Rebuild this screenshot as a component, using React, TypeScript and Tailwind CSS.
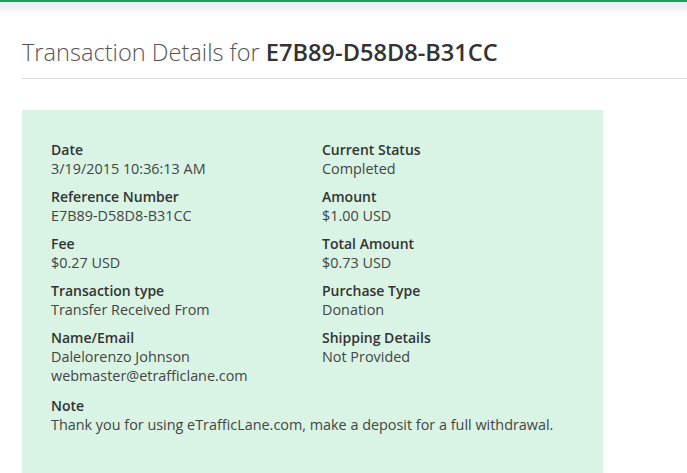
export default function App() {
  const left = [
    { label: 'Date', values: ['3/19/2015 10:36:13 AM'] },
    { label: 'Reference Number', values: ['E7B89-D58D8-B31CC'] },
    { label: 'Fee', values: ['$0.27 USD'] },
    { label: 'Transaction type', values: ['Transfer Received From'] },
    { label: 'Name/Email', values: ['Dalelorenzo Johnson', 'webmaster@etrafficlane.com'] },
  ]
  const right = [
    { label: 'Current Status', values: ['Completed'] },
    { label: 'Amount', values: ['$1.00 USD'] },
    { label: 'Total Amount', values: ['$0.73 USD'] },
    { label: 'Purchase Type', values: ['Donation'] },
    { label: 'Shipping Details', values: ['Not Provided'] },
  ]

  const Field = ({ label, values }: { label: string; values: string[] }) => (
    <div className="mb-[9px]">
      <div className="font-semibold text-[#333]">{label}</div>
      {values.map((v) => (
        <div key={v} className="text-[14.4px] text-[#444]">{v}</div>
      ))}
    </div>
  )

  return (
    <div className="h-screen overflow-hidden bg-white font-['Open_Sans',sans-serif] text-[14px] leading-[19px]">
      <div className="h-[2px] bg-[#239a55]" />
      <div className="h-[12px] bg-gradient-to-b from-[#e4f2f2] via-[#eeeff8] to-white" />

      <div className="pl-[22px]">
        <h1 className="pt-[22px] pb-[10px] text-[23.6px] leading-[32px] font-light text-[#555] border-b border-[#ddd]">
          Transaction Details for <span className="font-semibold text-[#333]">E7B89-D58D8-B31CC</span>
        </h1>

        <div className="mt-[31px] w-[581px] bg-[#d9f4e4] pl-[29px] pt-[30px] pb-[40px]">
          <div className="grid grid-cols-[271px_1fr]">
            <div>
              {left.map((f) => (
                <Field key={f.label} {...f} />
              ))}
            </div>
            <div>
              {right.map((f) => (
                <Field key={f.label} {...f} />
              ))}
            </div>
          </div>
          <div className="mt-[2px]">
            <Field label="Note" values={['Thank you for using eTrafficLane.com, make a deposit for a full withdrawal.']} />
          </div>
        </div>
      </div>
    </div>
  )
}
